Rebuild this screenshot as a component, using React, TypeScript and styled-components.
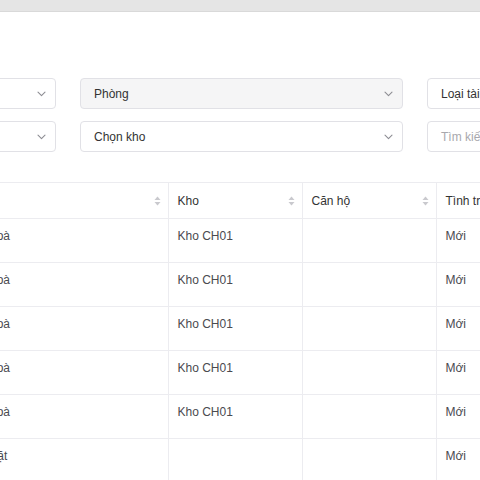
import React from "react";
import styled, { createGlobalStyle } from "styled-components";

const GlobalStyle = createGlobalStyle`
  html, body {
    margin: 0;
    padding: 0;
    background: #fff;
    overflow: hidden;
  }
  body {
    font-family: "Liberation Sans", Arial, Helvetica, sans-serif;
    font-size: 12px;
    color: #333;
  }
`;

const Page = styled.div`
  width: 480px;
  height: 480px;
  overflow: hidden;
`;

const TopBar = styled.div`
  height: 11px;
  background: #e5e5e5;
  border-bottom: 1px solid #d9d9d9;
`;

const Content = styled.div`
  padding-top: 66px;
`;

const FilterGrid = styled.div`
  display: grid;
  grid-template-columns: repeat(3, 323px);
  column-gap: 24px;
  row-gap: 12px;
  margin-left: -267px;
  width: max-content;
`;

const Field = styled.div<{ $disabled?: boolean }>`
  box-sizing: border-box;
  height: 31px;
  display: flex;
  align-items: center;
  justify-content: space-between;
  padding: 0 9px 0 13px;
  border: 1px solid #e1e1e6;
  border-radius: 4px;
  background: ${(p) => (p.$disabled ? "#f5f5f6" : "#fff")};
`;

const FieldText = styled.span<{ $placeholder?: boolean }>`
  font-size: 12px;
  color: ${(p) => (p.$placeholder ? "#a8a8ad" : "#333")};
  white-space: nowrap;
`;

const Chevron = () => (
  <svg width="9" height="6" viewBox="0 0 9 6" fill="none">
    <path d="M1 1.2 4.5 4.6 8 1.2" stroke="#8d8d93" strokeWidth="1.1" strokeLinecap="round" strokeLinejoin="round" />
  </svg>
);

const Select = ({ label, disabled }: { label: string; disabled?: boolean }) => (
  <Field $disabled={disabled}>
    <FieldText>{label}</FieldText>
    <Chevron />
  </Field>
);

const Table = styled.table`
  margin-top: 30px;
  margin-left: -47px;
  border-collapse: collapse;
  table-layout: fixed;
  width: 700px;
`;

const Th = styled.th`
  box-sizing: border-box;
  height: 36px;
  padding: 0 7px 0 9px;
  text-align: left;
  font-weight: 400;
  font-size: 12px;
  color: #333;
  border-top: 1px solid #ececf0;
  border-bottom: 1px solid #ececf0;
  border-right: 1px solid #ececf0;
  white-space: nowrap;
`;

const HeadInner = styled.div`
  display: flex;
  align-items: center;
  justify-content: space-between;
`;

const Td = styled.td`
  height: 44px;
  box-sizing: border-box;
  padding: 7px 9px 0;
  vertical-align: top;
  line-height: 20px;
  font-size: 12px;
  color: #4a4a4f;
  border-bottom: 1px solid #ececf0;
  border-right: 1px solid #ececf0;
  white-space: nowrap;
  overflow: hidden;
`;

const SortSvg = styled.svg`
  flex: none;
  display: block;
`;

const SortIcon = () => (
  <SortSvg width="7" height="10" viewBox="0 0 7 10">
    <path d="M3.5 0.5 6.5 4H0.5Z" fill="#c9c9ce" />
    <path d="M3.5 9.5 6.5 6H0.5Z" fill="#c9c9ce" />
  </SortSvg>
);

const columns = [
  { title: "Tên", w: 215 },
  { title: "Kho", w: 134 },
  { title: "Căn hộ", w: 134 },
  { title: "Tình trạng", w: 217 },
];

const rows = [
  ["Điều hoà", "Kho CH01", "", "Mới"],
  ["Điều hoà", "Kho CH01", "", "Mới"],
  ["Điều hoà", "Kho CH01", "", "Mới"],
  ["Điều hoà", "Kho CH01", "", "Mới"],
  ["Điều hoà", "Kho CH01", "", "Mới"],
  ["Máy giặt", "", "", "Mới"],
];

export default function App() {
  return (
    <Page>
      <GlobalStyle />
      <TopBar />
      <Content>
        <FilterGrid>
          <Select label="Tòa nhà" />
          <Select label="Phòng" disabled />
          <Select label="Loại tài sản" />
          <Select label="Căn hộ" />
          <Select label="Chọn kho" />
          <Field>
            <FieldText $placeholder>Tìm kiếm</FieldText>
          </Field>
        </FilterGrid>
        <Table>
          <colgroup>
            {columns.map((c) => (
              <col key={c.title} style={{ width: c.w }} />
            ))}
          </colgroup>
          <thead>
            <tr>
              {columns.map((c) => (
                <Th key={c.title}>
                  <HeadInner>
                    <span>{c.title}</span>
                    <SortIcon />
                  </HeadInner>
                </Th>
              ))}
            </tr>
          </thead>
          <tbody>
            {rows.map((r, i) => (
              <tr key={i}>
                {r.map((v, j) => (
                  <Td key={j}>{v}</Td>
                ))}
              </tr>
            ))}
          </tbody>
        </Table>
      </Content>
    </Page>
  );
}
